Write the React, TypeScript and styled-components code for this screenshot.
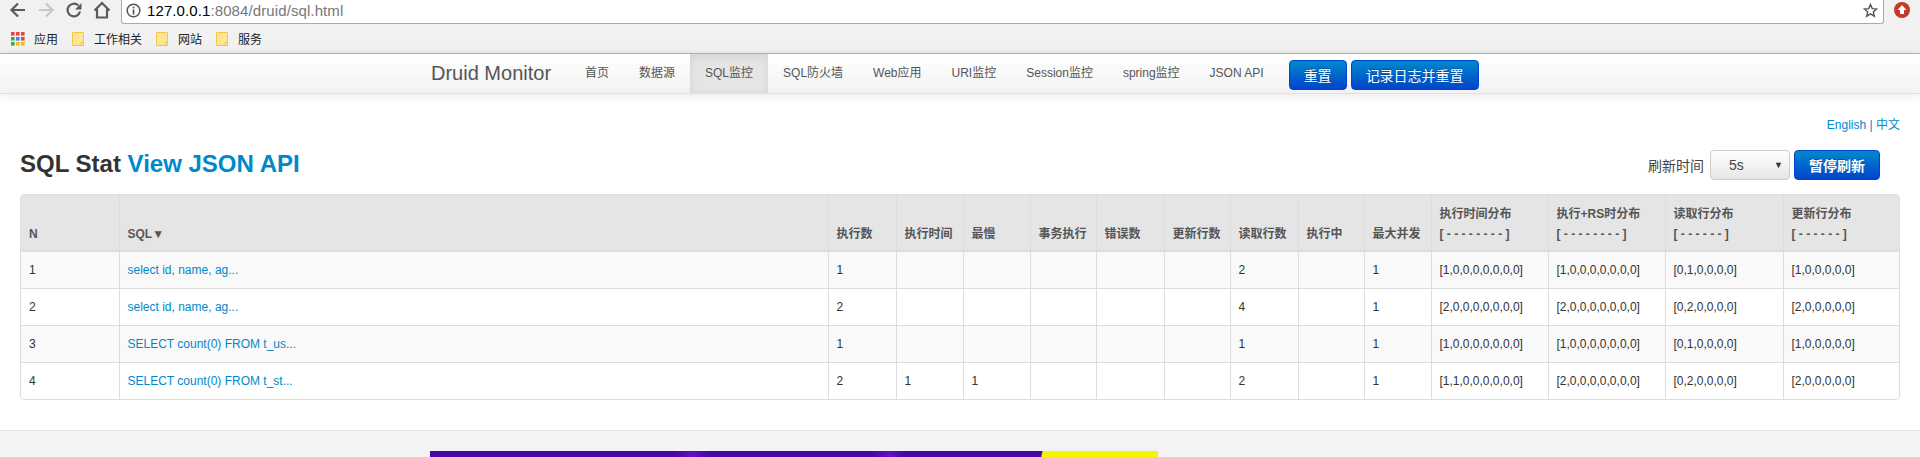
import React from 'react';
import styled, { createGlobalStyle } from 'styled-components';

const Global = createGlobalStyle`
  html, body { margin: 0; padding: 0; background: #fff; height: 457px; overflow: hidden; }
  body { font-family: "Liberation Sans", Arial, "Noto Sans CJK SC", sans-serif; font-size: 12px; color: #333; }
  * { box-sizing: border-box; }
`;

const Page = styled.div`width: 1920px; height: 457px; overflow: hidden; display: flex; flex-direction: column;`;
const ChromeTop = styled.div`height: 30px; background: #f1f1f1; display: flex; align-items: flex-start; flex: none;`;
const NavIcons = styled.div`width: 121px; height: 20px; display: flex; align-items: center; gap: 10px; padding-left: 9px; flex: none;`;
const Address = styled.div`
  flex: none; width: 1763px; height: 24px; background: #fff; border: 1px solid #a9a9a9; border-top: 0;
  border-radius: 0 0 3px 3px; display: flex; align-items: center; padding: 0 5px 3px 4px; gap: 6px;
  font-size: 15px; color: #777;
`;
const Host = styled.span`color: #000;`;
const Url = styled.span`flex: 1; letter-spacing: 0.1px;`;
const Ext = styled.div`flex: 1; height: 20px; display: flex; align-items: center; justify-content: center;`;
const Bookmarks = styled.div`
  height: 24px; background: #f1f1f1; border-bottom: 1px solid #b5b5b5; display: flex; align-items: center; padding: 0 0 6px 11px; flex: none;
  font-size: 12px; color: #222; gap: 14px;
`;
const Bookmark = styled.div<{ $gap: number }>`display: flex; align-items: center; gap: ${p => p.$gap}px;`;

const Navbar = styled.div`
  height: 40px; flex: none; display: flex; padding-left: 431px; position: relative; z-index: 1;
  background: linear-gradient(#fff, #f2f2f2); border-bottom: 1px solid #e0e0e0; box-shadow: 0 1px 10px rgba(0,0,0,.1);
`;
const Brand = styled.div`font-size: 20px; color: #555; width: 139px; line-height: 39px; flex: none;`;
const NavItem = styled.div<{ $active?: boolean }>`
  padding: 0 15px; height: 39px; line-height: 39px; text-align: center; color: #555; font-size: 12px; flex: none;
  ${p => p.$active && 'background: #e5e5e5; box-shadow: inset 0 3px 8px rgba(0,0,0,.08);'}
`;
const NavBtns = styled.div`display: flex; gap: 4px; margin-left: 10px; padding-top: 6px;`;
const Btn = styled.div<{ $w: number }>`
  width: ${p => p.$w}px; height: 30px; border-radius: 4px; background: linear-gradient(#0088cc, #0044cc);
  border: 1px solid #04c; color: #fff; font-size: 14px; font-weight: 700; display: flex; align-items: center; justify-content: center;
  text-shadow: 0 -1px 0 rgba(0,0,0,.25); flex: none;
`;
const NavBtn = styled(Btn)`font-weight: 400;`;

const Main = styled.div`flex: 1; padding: 0 21px 0 20px; display: flex; flex-direction: column;`;
const Lang = styled.div`text-align: right; color: #0088cc; font-size: 12px; line-height: 14px; padding: 24px 0 0; margin-right: -1px;`;
const HeadRow = styled.div`display: flex; justify-content: space-between; align-items: flex-start; height: 44px; margin-top: 18px;`;
const Title = styled.h3`margin: -2px 0 0; font-size: 24px; font-weight: 700; line-height: 32px; color: #333;`;
const TitleLink = styled.a`color: #0088cc;`;
const Refresh = styled.div`display: flex; align-items: center; height: 30px; margin-right: 19px; font-size: 14px; color: #444;`;
const RefreshLabel = styled.span`margin-right: 6px;`;
const SelectBox = styled.div`
  width: 80px; height: 30px; margin-right: 4px; border: 1px solid #ccc; border-radius: 4px; background: linear-gradient(#fff, #e6e6e6);
  display: flex; align-items: center; justify-content: space-between; padding: 0 6px 0 18px; font-size: 14px; color: #444;
`;
const Caret = styled.span`font-size: 9px; color: #333;`;

const TableWrap = styled.div`border: 1px solid #ddd; border-radius: 4px; overflow: hidden; width: 1880px;`;
const Table = styled.table`border-collapse: collapse; table-layout: fixed; width: 1878px; font-size: 12px;`;
const Col = styled.col<{ $w: number }>`width: ${p => p.$w}px;`;
const Th = styled.th`
  background: #e5e5e5; border-left: 1px solid #dcdcdc; border-bottom: 2px solid #ddd; height: 56px;
  padding: 7px 8px 6px; text-align: left; vertical-align: bottom; color: #555; font-weight: 700; line-height: 20px;
  &:first-child { border-left: 0; }
`;
const Row = styled.tr<{ $odd: boolean }>`background: ${p => (p.$odd ? '#f9f9f9' : '#fff')};`;
const Td = styled.td`
  border-left: 1px solid #ddd; border-top: 1px solid #ddd; height: 37px; padding: 0 8px; color: #333; white-space: nowrap; overflow: hidden;
  &:first-child { border-left: 0; }
  tr:first-child > & { border-top: 0; }
`;
const SqlLink = styled.a`color: #0088cc;`;

const Footer = styled.div`flex: none; height: 27px; background: #f3f3f3; border-top: 1px solid #e3e3e3; padding: 20px 0 0 430px;`;
const Banner = styled.div`
  width: 728px; height: 6px;
  background:
    linear-gradient(100deg, transparent 0 83.9%, #f5f500 84.1%),
    radial-gradient(circle at 36% 100%, #6a14c0 0, transparent 16px),
    radial-gradient(circle at 63% 100%, #6a14c0 0, transparent 16px),
    #4a05a6;
`;

const widths = [98, 709, 68, 67, 67, 66, 68, 66, 68, 66, 67, 117, 117, 118, 116];
const headers: React.ReactNode[] = ['N', 'SQL▼', '执行数', '执行时间', '最慢', '事务执行', '错误数', '更新行数', '读取行数', '执行中', '最大并发',
  <>执行时间分布<br />[ - - - - - - - - ]</>, <>执行+RS时分布<br />[ - - - - - - - - ]</>, <>读取行分布<br />[ - - - - - - ]</>, <>更新行分布<br />[ - - - - - - ]</>];
const rows = [
  ['1', 'select id, name, ag...', '1', '', '', '', '', '', '2', '', '1', '[1,0,0,0,0,0,0,0]', '[1,0,0,0,0,0,0,0]', '[0,1,0,0,0,0]', '[1,0,0,0,0,0]'],
  ['2', 'select id, name, ag...', '2', '', '', '', '', '', '4', '', '1', '[2,0,0,0,0,0,0,0]', '[2,0,0,0,0,0,0,0]', '[0,2,0,0,0,0]', '[2,0,0,0,0,0]'],
  ['3', 'SELECT count(0) FROM t_us...', '1', '', '', '', '', '', '1', '', '1', '[1,0,0,0,0,0,0,0]', '[1,0,0,0,0,0,0,0]', '[0,1,0,0,0,0]', '[1,0,0,0,0,0]'],
  ['4', 'SELECT count(0) FROM t_st...', '2', '1', '1', '', '', '', '2', '', '1', '[1,1,0,0,0,0,0,0]', '[2,0,0,0,0,0,0,0]', '[0,2,0,0,0,0]', '[2,0,0,0,0,0]'],
];
const navs: [string, boolean?][] = [['首页'], ['数据源'], ['SQL监控', true], ['SQL防火墙'], ['Web应用'], ['URI监控'], ['Session监控'], ['spring监控'], ['JSON API']];

const Back = () => <svg width="18" height="18" viewBox="0 0 18 18" fill="none" stroke="#5a5a5a" strokeWidth="2.2"><path d="M16 9H3M9 2.500 2.500 9 9 15.500" /></svg>;
const Forward = () => <svg width="18" height="18" viewBox="0 0 18 18" fill="none" stroke="#c8c8c8" strokeWidth="2.2"><path d="M2 9h13M9 2.500 15.500 9 9 15.500" /></svg>;
const Reload = () => <svg width="18" height="18" viewBox="0 0 18 18" fill="none" stroke="#5a5a5a" strokeWidth="2.2"><path d="M15 10.500A6.300 6.300 0 1 1 13.300 4.500" /><path d="M16.500 2v6.500H10z" fill="#5a5a5a" stroke="none" /></svg>;
const Home = () => <svg width="18" height="18" viewBox="0 0 18 18" fill="none" stroke="#5a5a5a" strokeWidth="2.2"><path d="M1.500 9.500 9 2l7.500 7.500M4 8v8.500h10V8" /></svg>;
const Info = () => <svg width="15" height="15" viewBox="0 0 15 15"><circle cx="7.500" cy="7.500" r="6.300" fill="none" stroke="#555" strokeWidth="1.500" /><rect x="6.700" y="6.500" width="1.700" height="5" fill="#555" /><rect x="6.700" y="3.700" width="1.700" height="1.700" fill="#555" /></svg>;
const Star = () => <svg width="15" height="15" viewBox="0 0 15 15" fill="none" stroke="#555" strokeWidth="1.400"><path d="M7.500 1.600 9.300 5.600l4.300.4-3.300 2.900 1 4.300-3.800-2.300-3.800 2.300 1-4.300L1.400 6l4.300-.4z" /></svg>;
const Update = () => <svg width="16" height="16" viewBox="0 0 16 16"><circle cx="8" cy="8" r="8" fill="#c5392a" /><path d="M8 3 12.500 8H10v4H6V8H3.500z" fill="#fff" /></svg>;
const Folder = () => <svg width="12" height="14" viewBox="0 0 12 14"><path d="M.5.5h11v13H.5z" fill="#fde694" stroke="#f0c64a" /><path d="M9 13.500v-3h2.500" fill="none" stroke="#f0c64a" /></svg>;
const Apps = () => {
  const c = ['#e8453c', '#e8453c', '#e8453c', '#34a853', '#4285f4', '#ea4335', '#34a853', '#fbbc05', '#fbbc05'];
  return <svg width="14" height="14" viewBox="0 0 14 14">{c.map((f, i) => <rect key={i} x={(i % 3) * 5} y={Math.floor(i / 3) * 5} width="3.600" height="3.600" fill={f} />)}</svg>;
};

export default function App() {
  return (
    <Page>
      <Global />
      <ChromeTop>
        <NavIcons><Back /><Forward /><Reload /><Home /></NavIcons>
        <Address><Info /><Url><Host>127.0.0.1</Host>:8084/druid/sql.html</Url><Star /></Address>
        <Ext><Update /></Ext>
      </ChromeTop>
      <Bookmarks>
        <Bookmark $gap={9}><Apps />应用</Bookmark>
        <Bookmark $gap={10}><Folder />工作相关</Bookmark>
        <Bookmark $gap={10}><Folder />网站</Bookmark>
        <Bookmark $gap={10}><Folder />服务</Bookmark>
      </Bookmarks>
      <Navbar>
        <Brand>Druid Monitor</Brand>
        {navs.map(([n, a]) => <NavItem key={n} $active={a}>{n}</NavItem>)}
        <NavBtns><NavBtn $w={58}>重置</NavBtn><NavBtn $w={128}>记录日志并重置</NavBtn></NavBtns>
      </Navbar>
      <Main>
        <Lang>English | 中文</Lang>
        <HeadRow>
          <Title>SQL Stat <TitleLink>View JSON API</TitleLink></Title>
          <Refresh><RefreshLabel>刷新时间</RefreshLabel><SelectBox>5s<Caret>▼</Caret></SelectBox><Btn $w={86}>暂停刷新</Btn></Refresh>
        </HeadRow>
        <TableWrap>
          <Table>
            <colgroup>{widths.map((w, i) => <Col key={i} $w={w} />)}</colgroup>
            <thead><tr>{headers.map((h, i) => <Th key={i}>{h}</Th>)}</tr></thead>
            <tbody>
              {rows.map((r, ri) => (
                <Row key={ri} $odd={ri % 2 === 0}>
                  {r.map((c, i) => <Td key={i}>{i === 1 ? <SqlLink>{c}</SqlLink> : c}</Td>)}
                </Row>
              ))}
            </tbody>
          </Table>
        </TableWrap>
      </Main>
      <Footer><Banner /></Footer>
    </Page>
  );
}
